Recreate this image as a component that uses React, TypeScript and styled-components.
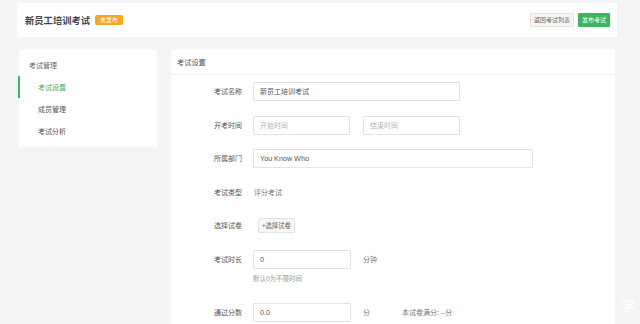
import React from "react";
import styled, { createGlobalStyle } from "styled-components";

const Global = createGlobalStyle`
  html, body { margin: 0; padding: 0; background: #f3f4f6; }
  body {
    font-family: "Noto Sans CJK SC", "Noto Sans", "Liberation Sans", sans-serif;
    color: #555;
    overflow: hidden;
  }
  * { box-sizing: border-box; }
`;

const Page = styled.div`
  position: relative;
  width: 640px;
  height: 324px;
  padding: 3px 23px 0 17px;
  overflow: hidden;
`;

const Header = styled.div`
  height: 34px;
  background: #fff;
  display: flex;
  align-items: center;
  padding: 0 7px 0 8px;
`;

const Title = styled.div`
  font-size: 9.3px;
  font-weight: 700;
  color: #444;
  line-height: 12px;
`;

const Badge = styled.span`
  margin-left: 5px;
  background: #f5a623;
  color: #fff;
  font-size: 6px;
  line-height: 10px;
  padding: 0 5px;
  border-radius: 2px;
`;

const Spacer = styled.div`
  flex: 1;
`;

const Btn = styled.button<{ $primary?: boolean }>`
  font-family: inherit;
  font-size: 6px;
  height: 14px;
  line-height: 12px;
  padding: 0 3px;
  margin-left: 4px;
  border-radius: 1px;
  border: 1px solid ${(p) => (p.$primary ? "#3cb55c" : "#e3e3e3")};
  background: ${(p) => (p.$primary ? "#3cb55c" : "#f6f6f6")};
  color: ${(p) => (p.$primary ? "#fff" : "#666")};
`;

const Body = styled.div`
  display: flex;
  align-items: flex-start;
  margin-top: 12px;
  padding-left: 2px;
  gap: 14px;
`;

const Side = styled.div`
  width: 138px;
  background: #fff;
  padding-bottom: 5px;
`;

const SideTitle = styled.div`
  height: 27px;
  padding: 9px 0 0 10px;
  font-size: 7px;
  line-height: 14px;
  color: #666;
`;

const SideItem = styled.div<{ $active?: boolean }>`
  height: 22px;
  line-height: 22px;
  padding-left: 18px;
  font-size: 7px;
  color: ${(p) => (p.$active ? "#3cb55c" : "#555")};
  border-left: 2px solid ${(p) => (p.$active ? "#3cb55c" : "transparent")};
  margin-left: -1px;
`;

const Main = styled.div`
  width: 444px;
  height: 300px;
  background: #fff;
`;

const MainHead = styled.div`
  height: 26px;
  line-height: 27px;
  padding-left: 6px;
  font-size: 7.2px;
  color: #555;
  border-bottom: 1px solid #eeeeee;
`;

const Form = styled.div`
  display: flex;
  flex-direction: column;
  gap: 14.5px;
  padding-top: 7px;
`;

const Row = styled.div`
  display: flex;
  align-items: flex-start;
`;

const Label = styled.div`
  width: 71px;
  flex: none;
  text-align: right;
  font-size: 7px;
  line-height: 19px;
  color: #555;
`;

const Field = styled.div`
  margin-left: 11px;
  display: flex;
  flex-direction: column;
`;

const Inline = styled.div`
  display: flex;
  align-items: center;
`;

const Input = styled.div<{ $w: number; $ph?: boolean }>`
  width: ${(p) => p.$w}px;
  height: 19px;
  border: 1px solid #e2e2e2;
  border-radius: 1px;
  padding-left: 6px;
  font-size: 7px;
  line-height: 17px;
  color: ${(p) => (p.$ph ? "#b5b5b5" : "#555")};
  font-family: "Noto Sans CJK SC", "Liberation Sans", sans-serif;
`;

const LatinText = styled.span`
  font-family: "Liberation Sans", "Noto Sans CJK SC", sans-serif;
  font-size: 7.2px;
`;

const Text = styled.div<{ $ml?: number; $color?: string }>`
  margin-left: ${(p) => p.$ml ?? 0}px;
  font-size: 7px;
  line-height: 19px;
  color: ${(p) => p.$color ?? "#777"};
`;

const Help = styled.div`
  font-size: 6.5px;
  line-height: 10px;
  margin-top: 4px;
  margin-bottom: 6px;
  color: #999;
`;

const SelectBtn = styled.div`
  margin: 2px 0 0 5px;
  height: 15px;
  line-height: 13px;
  padding: 0 3px;
  font-size: 6.3px;
  color: #666;
  background: #f6f6f6;
  border: 1px solid #e2e2e2;
  border-radius: 1px;
`;

const Watermark = styled.div`
  position: absolute;
  right: 5px;
  bottom: 10px;
  font-size: 13px;
  color: rgba(255, 255, 255, 0.85);
  font-weight: 700;
`;

export default function App() {
  return (
    <>
      <Global />
      <Page>
        <Header>
          <Title>新员工培训考试</Title>
          <Badge>未发布</Badge>
          <Spacer />
          <Btn>返回考试列表</Btn>
          <Btn $primary>发布考试</Btn>
        </Header>
        <Body>
          <Side>
            <SideTitle>考试管理</SideTitle>
            <SideItem $active>考试设置</SideItem>
            <SideItem>成员管理</SideItem>
            <SideItem>考试分析</SideItem>
          </Side>
          <Main>
            <MainHead>考试设置</MainHead>
            <Form>
              <Row>
                <Label>考试名称</Label>
                <Field>
                  <Input $w={207}>新员工培训考试</Input>
                </Field>
              </Row>
              <Row>
                <Label>开考时间</Label>
                <Field>
                  <Inline>
                    <Input $w={97} $ph>开始时间</Input>
                    <Text $ml={13} as="div">
                      <Input $w={97} $ph>结束时间</Input>
                    </Text>
                  </Inline>
                </Field>
              </Row>
              <Row>
                <Label>所属部门</Label>
                <Field>
                  <Input $w={280}>
                    <LatinText>You Know Who</LatinText>
                  </Input>
                </Field>
              </Row>
              <Row>
                <Label>考试类型</Label>
                <Field>
                  <Text $ml={1}>评分考试</Text>
                </Field>
              </Row>
              <Row>
                <Label>选择试卷</Label>
                <Field>
                  <SelectBtn>+选择试卷</SelectBtn>
                </Field>
              </Row>
              <Row>
                <Label>考试时长</Label>
                <Field>
                  <Inline>
                    <Input $w={98}>
                      <LatinText>0</LatinText>
                    </Input>
                    <Text $ml={12}>分钟</Text>
                  </Inline>
                  <Help>默认0为不限时间</Help>
                </Field>
              </Row>
              <Row>
                <Label>通过分数</Label>
                <Field>
                  <Inline>
                    <Input $w={98}>
                      <LatinText>0.0</LatinText>
                    </Input>
                    <Text $ml={12}>分</Text>
                    <Text $ml={32}>本试卷满分: --分</Text>
                  </Inline>
                </Field>
              </Row>
            </Form>
          </Main>
        </Body>
        <Watermark>学</Watermark>
      </Page>
    </>
  );
}
